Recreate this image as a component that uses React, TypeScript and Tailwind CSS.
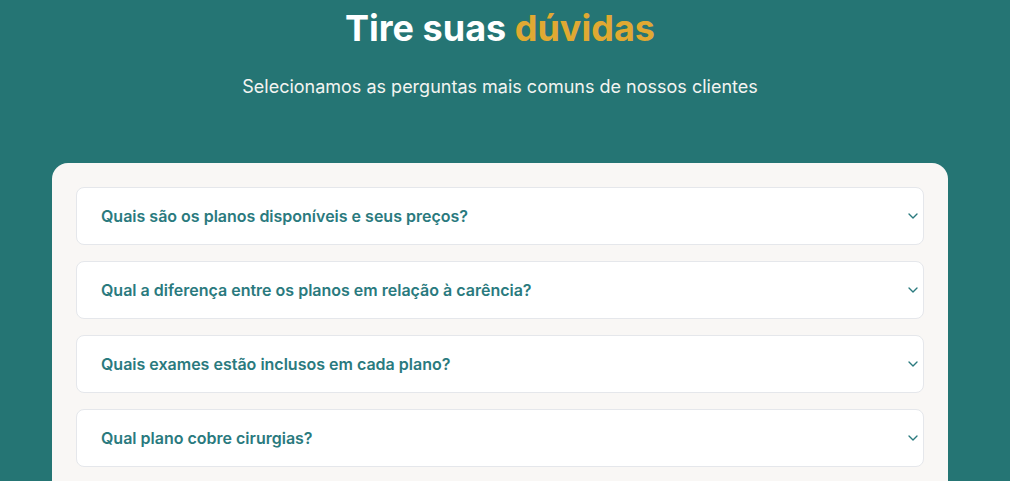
import React from "react";

const questions = [
  "Quais são os planos disponíveis e seus preços?",
  "Qual a diferença entre os planos em relação à carência?",
  "Quais exames estão inclusos em cada plano?",
  "Qual plano cobre cirurgias?",
];

function Chevron() {
  return (
    <svg width="16" height="16" viewBox="0 0 24 24" fill="none" stroke="currentColor" strokeWidth="2" strokeLinecap="round" strokeLinejoin="round">
      <path d="m6 9 6 6 6-6" />
    </svg>
  );
}

export default function App() {
  return (
    <div className="w-[1010px] h-[481px] overflow-hidden bg-[#257574]" style={{ fontFamily: "Inter, 'Noto Sans', sans-serif" }}>
      <div className="w-[1000px]">
        <div className="flex flex-col items-center pt-[8px]">
          <h2 className="text-[36px] leading-[40px] font-bold text-white">
            Tire suas <span className="text-[#e0a932]">dúvidas</span>
          </h2>
          <p className="mt-[25px] text-[18px] leading-[28px] text-[#f3f4f1]">
            Selecionamos as perguntas mais comuns de nossos clientes
          </p>
        </div>
        <div className="mx-[52px] mt-[62px] bg-[#f9f7f5] rounded-[16px] p-[24px] flex flex-col gap-[16px] pb-[40px]">
          {questions.map((q) => (
            <div key={q} className="bg-white border border-[#e5e7eb] rounded-[8px] pl-[24px] pr-[2px] py-[16px] flex items-center justify-between">
              <span className="text-[16px] leading-[24px] font-semibold text-[#2a7a7e]">{q}</span>
              <span className="text-[#2a7a7e]"><Chevron /></span>
            </div>
          ))}
        </div>
      </div>
    </div>
  );
}
